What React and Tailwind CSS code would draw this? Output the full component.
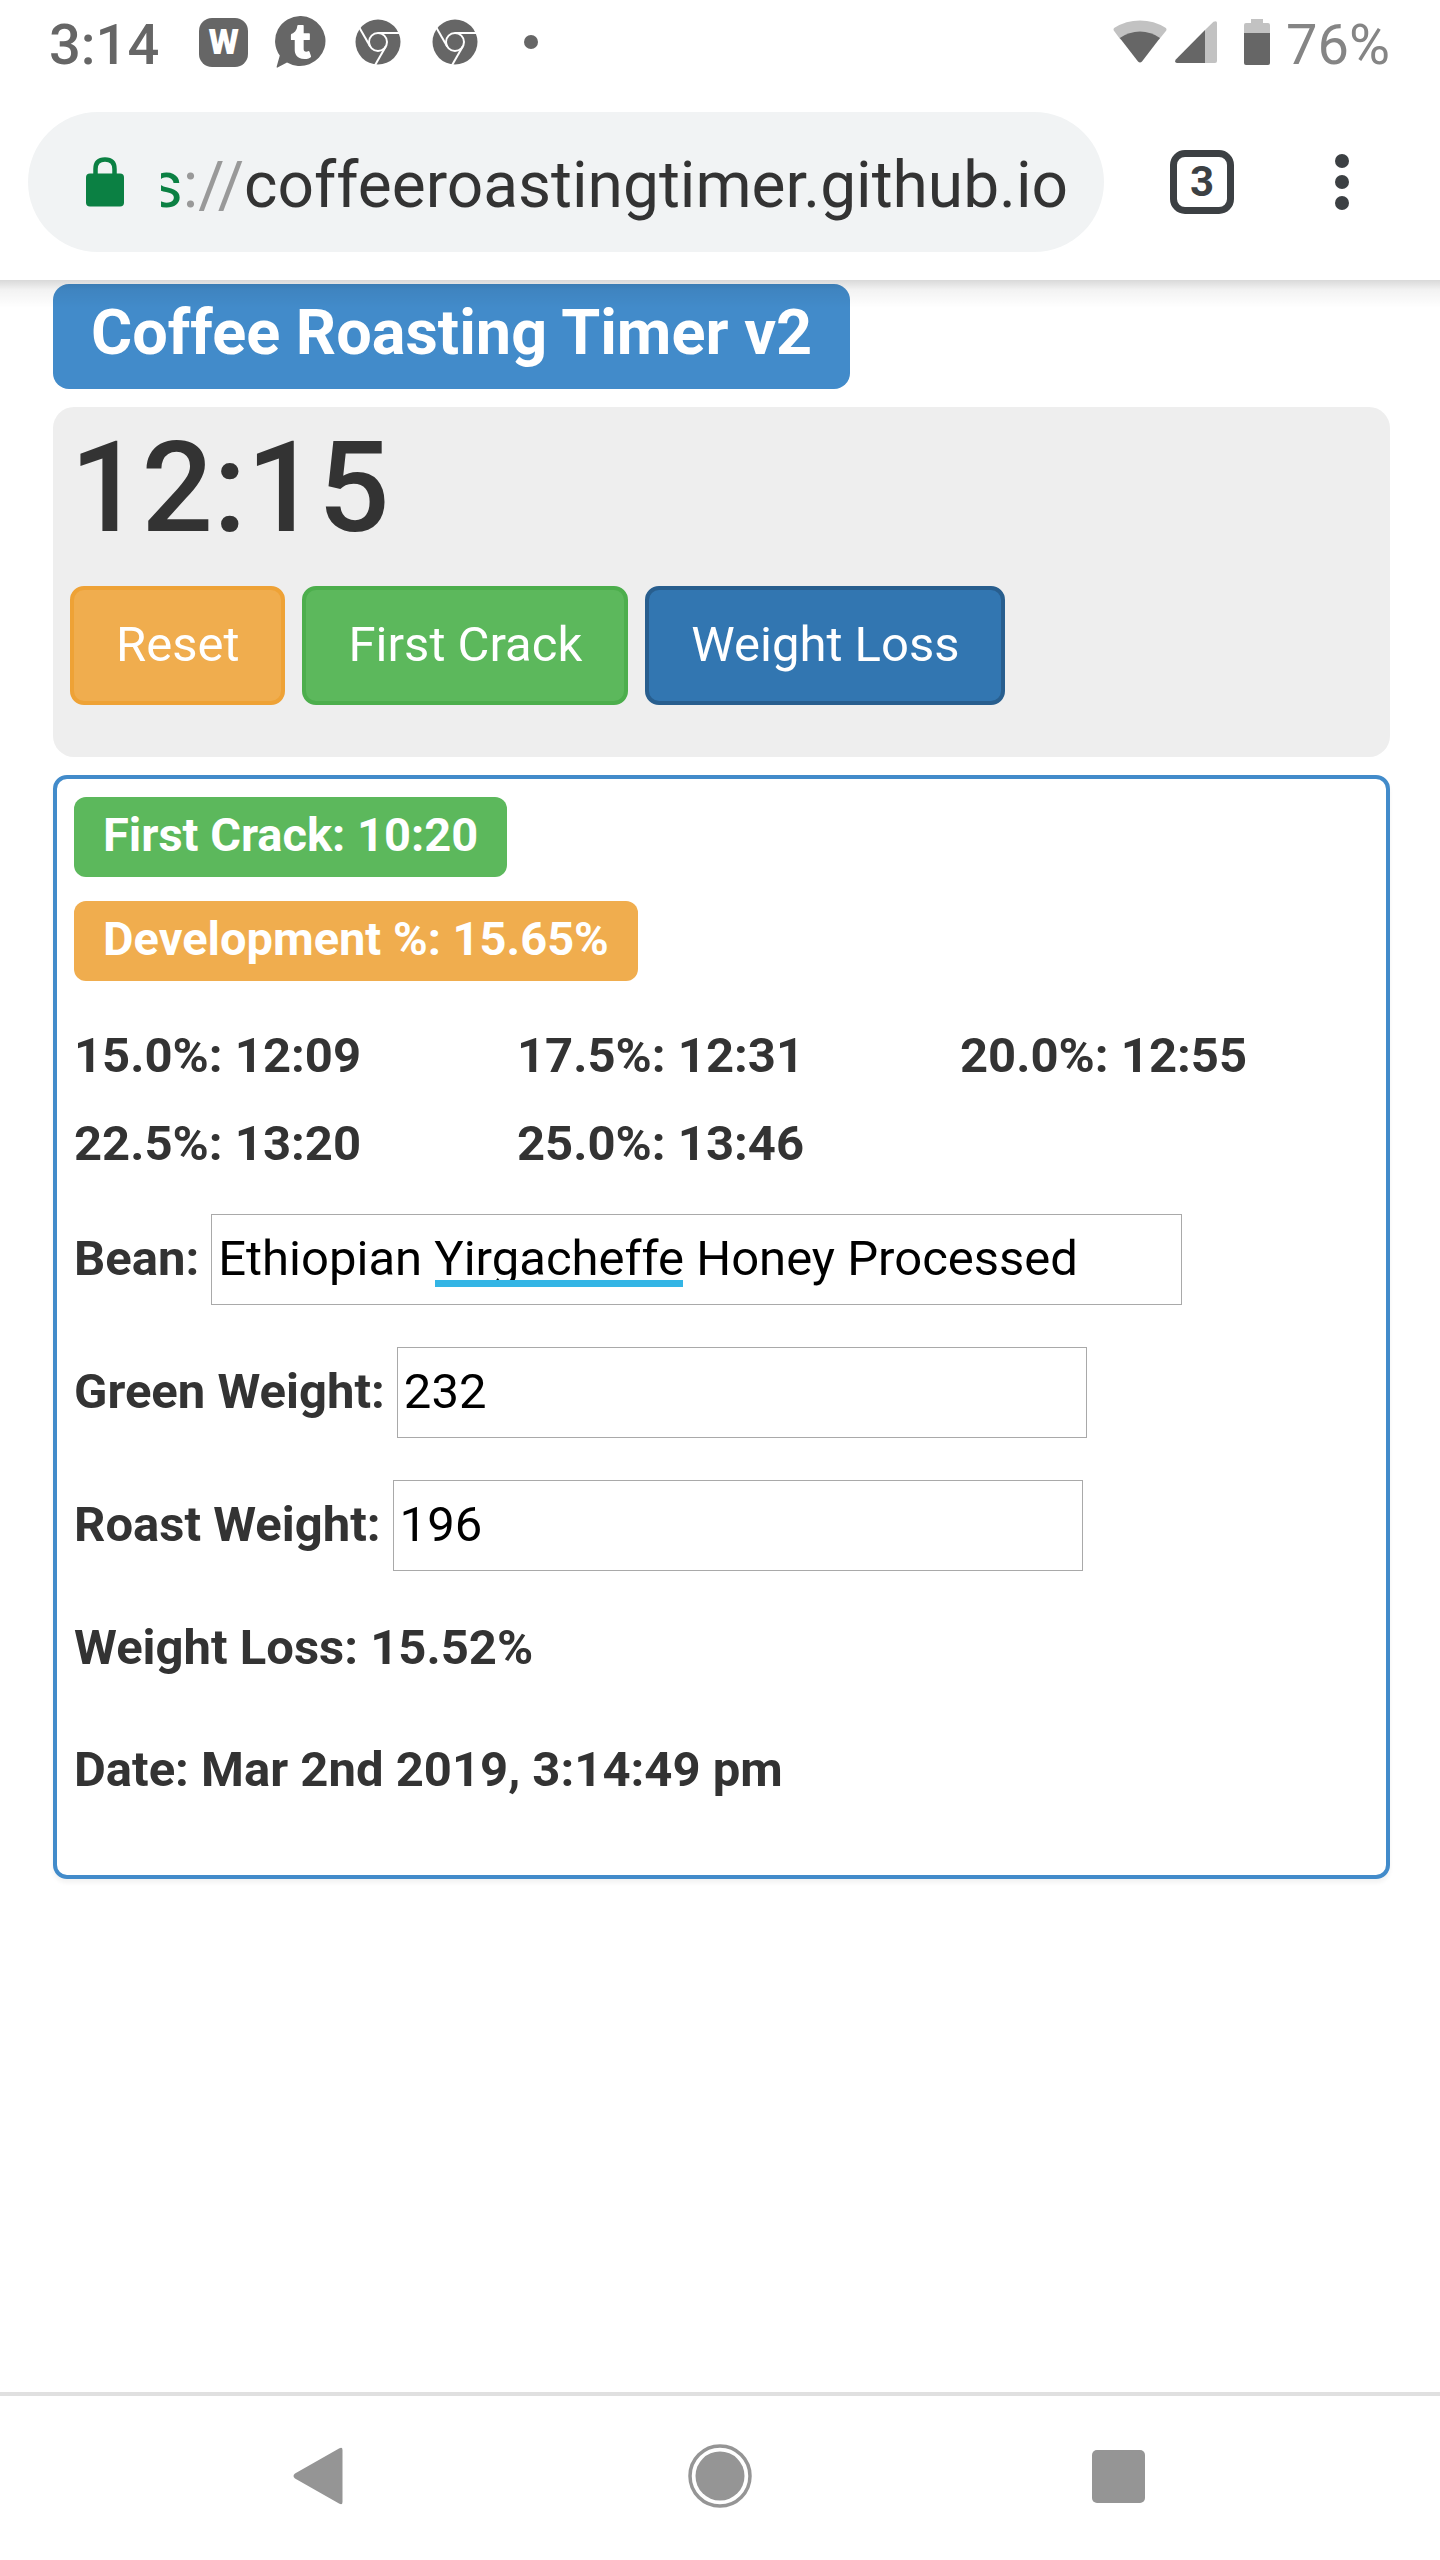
import { FaTumblr } from "react-icons/fa";

const milestones = [
  { percent: "15.0%", time: "12:09" },
  { percent: "17.5%", time: "12:31" },
  { percent: "20.0%", time: "12:55" },
  { percent: "22.5%", time: "13:20" },
  { percent: "25.0%", time: "13:46" },
];

function ChromeIcon() {
  return (
    <svg width="46" height="46" viewBox="0 0 46 46" aria-hidden="true">
      <circle cx="23" cy="23" r="22.5" fill="#666666" />
      <g fill="none" stroke="#ffffff" strokeWidth="2">
        <circle cx="23" cy="23" r="9" />
        <path d="M23 14H46" />
        <path d="M23 14H46" transform="rotate(120 23 23)" />
        <path d="M23 14H46" transform="rotate(240 23 23)" />
      </g>
    </svg>
  );
}

function StatusBar() {
  return (
    <div className="flex h-[84px] items-center justify-between pr-[50px] pl-[49px] text-[56px] leading-[64px]">
      <div className="flex items-center text-[#666666]">
        <span className="pt-1.5 font-medium">3:14</span>
        <span className="ml-10 flex size-[49px] items-center justify-center rounded-[13px] bg-[#666666] text-[35px] leading-none font-black text-white">
          W
        </span>
        <span className="relative ml-[27px] flex h-[52px] w-[52px] items-center justify-center">
          <svg className="absolute inset-0" width="52" height="52" viewBox="0 0 52 52" aria-hidden="true">
            <path
              d="M26 0A25.5 25 0 1 1 12 46.500L2.500 51.500Q1.500 52 1.700 50.500L4.800 39.500A25.500 25 0 0 1 26 0Z"
              fill="#666666"
            />
          </svg>
          <FaTumblr className="relative h-[34px] w-[24px] text-white" aria-hidden="true" />
        </span>
        <span className="ml-7 flex gap-[31px]">
          <ChromeIcon />
          <ChromeIcon />
        </span>
        <span className="ml-[46px] size-3.5 rounded-full bg-[#666666]" />
      </div>
      <div className="flex items-center text-[#858585]">
        <svg width="54" height="46" viewBox="0 0 54 46" aria-hidden="true">
          <path d="M1.500 12.500Q-.5 10.500 1.500 8.800Q13 1.500 27 1.500T52.500 8.800Q54.500 10.500 52.500 12.500L46 20.500L27 30L7 20Z" fill="#c2c2c2" />
          <path d="M6.800 19Q16 12.500 27 12.500T47 19L29 42.500Q27 44.500 25 42.500Z" fill="#666666" />
        </svg>
        <svg className="ml-2" width="42" height="42" viewBox="0 0 42 42" aria-hidden="true">
          <path d="M38.500 .8Q42 -1 42 2V40Q42 42 40 42H30V9Z" fill="#c2c2c2" />
          <path d="M30 9V42H2Q-1 41.500 .8 38.500Z" fill="#666666" />
        </svg>
        <svg className="ml-[27px]" width="26" height="46" viewBox="0 0 26 46" aria-hidden="true">
          <path d="M7 0H19V4H24Q26 4 26 6V16H0V6Q0 4 2 4H7Z" fill="#c2c2c2" />
          <path d="M0 14H26V44Q26 46 24 46H2Q0 46 0 44Z" fill="#666666" />
        </svg>
        <span className="ml-4 pt-1.5">76%</span>
      </div>
    </div>
  );
}

function AddressBar() {
  return (
    <div className="flex items-center py-7 pr-[66px] pl-7">
      <div className="flex h-[140px] min-w-0 flex-1 items-center rounded-full bg-[#f1f3f4] pr-[36px] pl-[58px]">
        <svg className="shrink-0" width="38" height="50" viewBox="0 0 38 50" aria-hidden="true">
          <rect y="16.500" width="38" height="33" rx="4" fill="#0b8043" />
          <path d="M9.500 20V12Q9.500 2.500 19 2.500T28.500 12V20" fill="none" stroke="#0b8043" strokeWidth="4.500" />
        </svg>
        <a
          href="https://coffeeroastingtimer.github.io"
          className="ml-[37px] flex min-w-0 flex-1 justify-end overflow-hidden pt-2 text-[64px] leading-[80px] whitespace-nowrap text-[#333333]"
        >
          <span className="text-[#0b8043]">s</span>
          <span className="text-[#999999]">://</span>
          <span>coffeeroastingtimer.github.io</span>
        </a>
      </div>
      <button
        type="button"
        aria-label="3 open tabs"
        className="ml-[66px] flex size-16 items-center justify-center rounded-[15px] border-[7px] border-[#3c4043] text-[42px] leading-none font-bold text-[#3c4043]"
      >
        3
      </button>
      <button type="button" aria-label="Menu" className="ml-[76px] flex w-16 flex-col items-center gap-[7px]">
        <span className="size-3.5 rounded-full bg-[#3c4043]" />
        <span className="size-3.5 rounded-full bg-[#3c4043]" />
        <span className="size-3.5 rounded-full bg-[#3c4043]" />
      </button>
    </div>
  );
}

function Field({ id, label, value, inputClass, children }) {
  return (
    <div className="flex items-center gap-3 px-[17px]">
      <label htmlFor={id} className="shrink-0 pb-px font-bold">
        {label}
      </label>
      <div className="relative min-w-0">
        <input
          id={id}
          type="text"
          defaultValue={value}
          spellCheck={false}
          className={`block h-[91px] max-w-full border border-[#a9a9a9] bg-white px-1.5 pb-[3px] text-black ${inputClass}`}
        />
        {children}
      </div>
    </div>
  );
}

export default function App() {
  const button = "rounded-[14px] border-4 px-[42px] pt-5 pb-[22px] leading-[69px] text-white";
  const badge = "rounded-xl px-[29px] pt-[13px] pb-[18px] text-[47px] leading-[49px] font-bold text-white";
  return (
    <div className="flex min-h-screen flex-col bg-white font-['Roboto',sans-serif] text-[49px] leading-[70px] text-[#333333]">
      <header className="relative z-10 bg-white">
        <StatusBar />
        <AddressBar />
        <div className="pointer-events-none absolute inset-x-0 top-full h-7 bg-linear-to-b from-black/15 via-black/5 via-35% to-transparent" />
      </header>

      <main className="flex flex-col gap-[18px] pt-1 pr-[50px] pl-[53px]">
        <h1 className="self-start rounded-2xl bg-[#428bca] px-[38px] pt-[17px] pb-[25px] text-[63px] leading-[63px] font-bold text-white">
          Coffee Roasting Timer v2
        </h1>

        <section className="rounded-[21px] bg-[#eeeeee] px-[17px] pt-3 pb-[52px]">
          <div className="text-[126px] leading-[138px] font-medium">12:15</div>
          <div className="mt-[29px] flex flex-wrap gap-[17px]">
            <button type="button" className={`${button} border-[#eea236] bg-[#f0ad4e]`}>
              Reset
            </button>
            <button type="button" className={`${button} border-[#4cae4c] bg-[#5cb85c]`}>
              First Crack
            </button>
            <button type="button" className={`${button} border-[#285e8e] bg-[#3276b1]`}>
              Weight Loss
            </button>
          </div>
        </section>

        <section className="rounded-[14px] border-4 border-[#428bca] pt-[18px] pb-[70px] shadow-[0_4px_4px_rgba(0,0,0,0.05)]">
          <div className="flex flex-col items-start gap-6 px-[17px]">
            <span className={`${badge} bg-[#5cb85c]`}>First Crack: 10:20</span>
            <span className={`${badge} bg-[#f0ad4e]`}>Development %: 15.65%</span>
          </div>
          <ul className="mt-10 grid grid-cols-3 gap-y-[18px] font-bold">
            {milestones.map((m) => (
              <li key={m.percent} className="pl-[17px]">
                {m.percent}: {m.time}
              </li>
            ))}
          </ul>
          <div className="mt-[35px] flex flex-col gap-[42px]">
            <Field id="bean" label="Bean:" value="Ethiopian Yirgacheffe Honey Processed" inputClass="w-[971px]">
              <span className="pointer-events-none absolute top-[66px] left-[224px] h-[7px] w-[248px] bg-[#33b5e5]" />
            </Field>
            <Field id="green" label="Green Weight:" value="232" inputClass="w-[690px]" />
            <Field id="roast" label="Roast Weight:" value="196" inputClass="w-[690px]" />
          </div>
          <p className="mt-[42px] px-[17px] font-bold">Weight Loss: 15.52%</p>
          <p className="mt-[52px] px-[17px] font-bold">Date: Mar 2nd 2019, 3:14:49 pm</p>
        </section>
      </main>

      <nav aria-label="System" className="mt-auto grid grid-cols-[400px_400px_400px] items-center justify-center border-t-4 border-[#e0e0e0] pt-12 pb-[52px]">
        <button type="button" aria-label="Back" className="flex h-16 items-center justify-center pr-1">
          <svg width="50" height="58" viewBox="0 0 50 58" aria-hidden="true">
            <path d="M46 1.500Q49.500 -.5 49.500 3V55Q49.500 58.500 46 56.500L2 31.500Q-1 29 2 26.500Z" fill="#959595" />
          </svg>
        </button>
        <button type="button" aria-label="Home" className="flex h-16 items-center justify-center">
          <svg width="64" height="64" viewBox="0 0 64 64" aria-hidden="true">
            <circle cx="32" cy="32" r="30" fill="none" stroke="#959595" strokeWidth="3.500" />
            <circle cx="32" cy="32" r="24.500" fill="#959595" />
          </svg>
        </button>
        <button type="button" aria-label="Recent apps" className="flex h-16 items-center justify-center pr-1">
          <span className="size-[53px] rounded-[5px] bg-[#959595]" />
        </button>
      </nav>
    </div>
  );
}
